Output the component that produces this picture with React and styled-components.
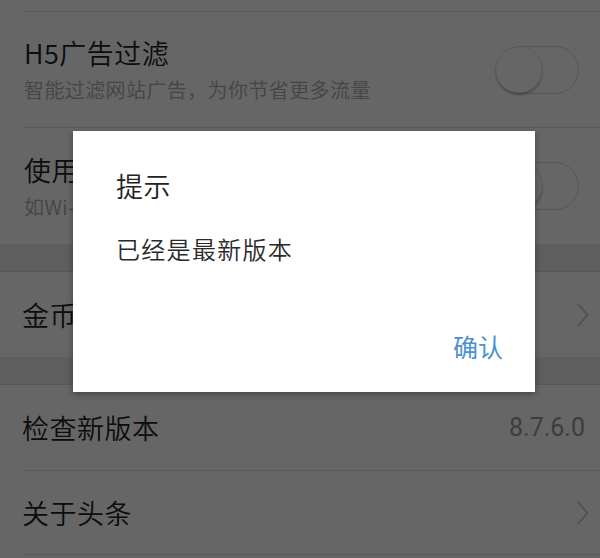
import React from "react";
import styled, { createGlobalStyle } from "styled-components";

const GlobalStyle = createGlobalStyle`
  html, body {
    margin: 0;
    padding: 0;
  }
  body {
    font-family: "Noto Sans CJK SC", "Noto Sans", sans-serif;
    -webkit-font-smoothing: antialiased;
  }
`;

const Page = styled.div`
  position: relative;
  width: 600px;
  height: 558px;
  overflow: hidden;
  background: #ffffff;
`;

const Row = styled.div`
  padding-left: 22px;
  background: #ffffff;
`;

const RowInner = styled.div`
  box-sizing: border-box;
  height: ${(p) => p.$h}px;
  display: flex;
  align-items: center;
  justify-content: space-between;
  padding-right: ${(p) => p.$pr || 16}px;
  border-bottom: ${(p) => (p.$divider ? "1px solid #e2e2e2" : "none")};
`;

const Band = styled.div`
  box-sizing: border-box;
  height: 28px;
  background: #ebebeb;
  border-bottom: 1px solid #dcdcdc;
`;

const TextBlock = styled.div`
  display: flex;
  flex-direction: column;
  gap: 9px;
  padding-left: 2px;
`;

const Title = styled.div`
  font-size: 27px;
  line-height: 32px;
  font-weight: 350;
  color: #222222;
  letter-spacing: 0.5px;
  white-space: nowrap;
`;

const Subtitle = styled.div`
  font-size: 20px;
  line-height: 24px;
  font-weight: 350;
  color: #acacac;
  letter-spacing: 0.4px;
  white-space: nowrap;
`;

const Value = styled.div`
  font-family: "Roboto", "Noto Sans", sans-serif;
  font-size: 25px;
  color: #9a9a9a;
`;

const Track = styled.div`
  position: relative;
  box-sizing: border-box;
  width: 82px;
  height: 48px;
  border-radius: 24px;
  border: 1px solid #dadada;
  background: #ffffff;
`;

const Knob = styled.div`
  position: absolute;
  left: -2px;
  top: 0px;
  width: 46px;
  height: 46px;
  border-radius: 50%;
  background: #ffffff;
  box-shadow: 0 2px 3px rgba(0, 0, 0, 0.28), 0 0 1px rgba(0, 0, 0, 0.25);
`;

const Overlay = styled.div`
  position: absolute;
  inset: 0;
  background: rgba(0, 0, 0, 0.6);
  display: flex;
  align-items: flex-start;
  padding: 131px 0 0 73px;
`;

const Dialog = styled.div`
  box-sizing: border-box;
  width: 462px;
  height: 261px;
  background: #ffffff;
  box-shadow: 0 2px 6px rgba(0, 0, 0, 0.35);
  display: flex;
  flex-direction: column;
  padding: 38px 32px 0 43px;
`;

const DialogTitle = styled.div`
  font-size: 27px;
  line-height: 34px;
  font-weight: 350;
  color: #222222;
  letter-spacing: 0.5px;
`;

const DialogBody = styled.div`
  margin-top: 30px;
  font-size: 24px;
  line-height: 32px;
  font-weight: 350;
  color: #2a2a2a;
  letter-spacing: 1.3px;
`;

const Actions = styled.div`
  margin-top: 66px;
  display: flex;
  justify-content: flex-end;
`;

const ActionButton = styled.button`
  border: none;
  background: none;
  padding: 0;
  font-family: inherit;
  font-size: 25px;
  line-height: 30px;
  color: #4a92d0;
  cursor: pointer;
`;

function Toggle() {
  return (
    <Track>
      <Knob />
    </Track>
  );
}

function Chevron() {
  return (
    <svg width="13" height="26" viewBox="0 0 13 26" fill="none">
      <path d="M1.5 1.5 L11.5 13 L1.5 24.5" stroke="#c4c4c4" strokeWidth="1.5" />
    </svg>
  );
}

export default function App() {
  return (
    <Page>
      <GlobalStyle />

      {/* settings list, scrolled so the previous row is cut at the top */}
      <Row>
        <RowInner $h={12} $divider />
      </Row>
      <Row>
        <RowInner $h={116} $divider $pr={21}>
          <TextBlock>
            <Title>H5广告过滤</Title>
            <Subtitle>智能过滤网站广告，为你节省更多流量</Subtitle>
          </TextBlock>
          <Toggle />
        </RowInner>
      </Row>
      <Row>
        <RowInner $h={116} $pr={21}>
          <TextBlock>
            <Title>使用系统播放器</Title>
            <Subtitle>如Wi-Fi下播放异常，可尝试开启</Subtitle>
          </TextBlock>
          <Toggle />
        </RowInner>
      </Row>
      <Band />
      <Row>
        <RowInner $h={85} $pr={11}>
          <Title>金币收益提醒</Title>
          <Chevron />
        </RowInner>
      </Row>
      <Band />
      <Row>
        <RowInner $h={86} $divider $pr={15}>
          <Title>检查新版本</Title>
          <Value>8.7.6.0</Value>
        </RowInner>
      </Row>
      <Row>
        <RowInner $h={84} $divider $pr={11}>
          <Title>关于头条</Title>
          <Chevron />
        </RowInner>
      </Row>

      {/* alert dialog */}
      <Overlay>
        <Dialog>
          <DialogTitle>提示</DialogTitle>
          <DialogBody>已经是最新版本</DialogBody>
          <Actions>
            <ActionButton>确认</ActionButton>
          </Actions>
        </Dialog>
      </Overlay>
    </Page>
  );
}
